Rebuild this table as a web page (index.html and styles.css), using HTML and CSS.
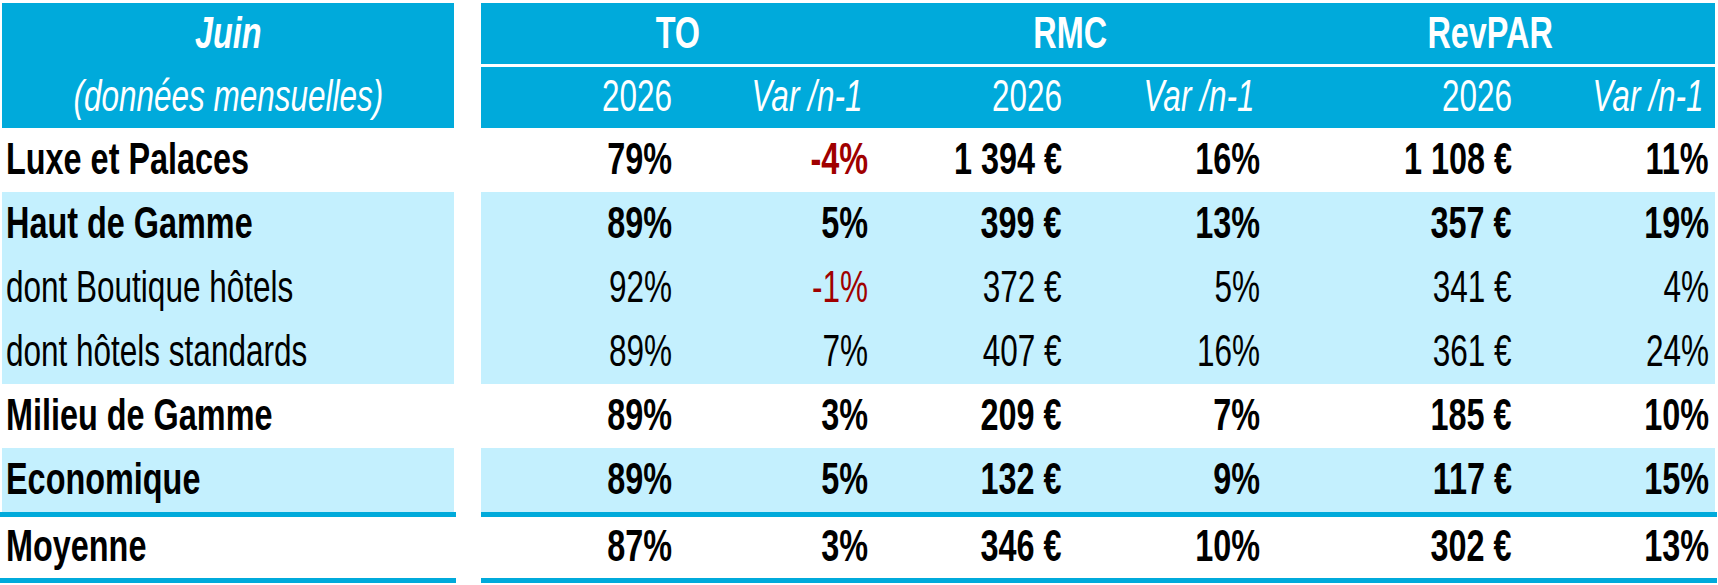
FILE: index.html
```html
<!DOCTYPE html>
<html lang="fr">
<head>
<meta charset="utf-8">
<title>Juin - données mensuelles</title>
<link rel="stylesheet" href="styles.css">
</head>
<body>
<div class="sheet">
  <div class="corner">
    <div class="corner-top"><span class="t">Juin</span></div>
    <div class="corner-bot"><span class="t">(données mensuelles)</span></div>
  </div>
  <div class="grp g-to"><span class="t">TO</span></div>
  <div class="grp g-rmc"><span class="t">RMC</span></div>
  <div class="grp g-rev"><span class="t">RevPAR</span></div>

  <div class="sub c3"><span class="t">2026</span></div>
  <div class="sub var c4"><span class="t">Var /n-1</span></div>
  <div class="sub c5"><span class="t">2026</span></div>
  <div class="sub var c6"><span class="t">Var /n-1</span></div>
  <div class="sub c7"><span class="t">2026</span></div>
  <div class="sub var c8"><span class="t">Var /n-1</span></div>

  <div class="row bold">
    <div class="lab"><span class="t">Luxe et Palaces</span></div>
    <div class="val"><span class="t">79%</span></div>
    <div class="val neg"><span class="t">-4%</span></div>
    <div class="val"><span class="t">1 394 €</span></div>
    <div class="val"><span class="t">16%</span></div>
    <div class="val"><span class="t">1 108 €</span></div>
    <div class="val"><span class="t">11%</span></div>
  </div>

  <div class="row bold alt">
    <div class="lab"><span class="t">Haut de Gamme</span></div>
    <div class="val"><span class="t">89%</span></div>
    <div class="val"><span class="t">5%</span></div>
    <div class="val"><span class="t">399 €</span></div>
    <div class="val"><span class="t">13%</span></div>
    <div class="val"><span class="t">357 €</span></div>
    <div class="val"><span class="t">19%</span></div>
  </div>

  <div class="row alt">
    <div class="lab"><span class="t">dont Boutique hôtels</span></div>
    <div class="val"><span class="t">92%</span></div>
    <div class="val neg"><span class="t">-1%</span></div>
    <div class="val"><span class="t">372 €</span></div>
    <div class="val"><span class="t">5%</span></div>
    <div class="val"><span class="t">341 €</span></div>
    <div class="val"><span class="t">4%</span></div>
  </div>

  <div class="row alt">
    <div class="lab"><span class="t">dont hôtels standards</span></div>
    <div class="val"><span class="t">89%</span></div>
    <div class="val"><span class="t">7%</span></div>
    <div class="val"><span class="t">407 €</span></div>
    <div class="val"><span class="t">16%</span></div>
    <div class="val"><span class="t">361 €</span></div>
    <div class="val"><span class="t">24%</span></div>
  </div>

  <div class="row bold">
    <div class="lab"><span class="t">Milieu de Gamme</span></div>
    <div class="val"><span class="t">89%</span></div>
    <div class="val"><span class="t">3%</span></div>
    <div class="val"><span class="t">209 €</span></div>
    <div class="val"><span class="t">7%</span></div>
    <div class="val"><span class="t">185 €</span></div>
    <div class="val"><span class="t">10%</span></div>
  </div>

  <div class="row bold alt">
    <div class="lab"><span class="t">Economique</span></div>
    <div class="val"><span class="t">89%</span></div>
    <div class="val"><span class="t">5%</span></div>
    <div class="val"><span class="t">132 €</span></div>
    <div class="val"><span class="t">9%</span></div>
    <div class="val"><span class="t">117 €</span></div>
    <div class="val"><span class="t">15%</span></div>
  </div>

  <div class="rule rule-l"></div>
  <div class="rule rule-r"></div>

  <div class="row bold total">
    <div class="lab"><span class="t">Moyenne</span></div>
    <div class="val"><span class="t">87%</span></div>
    <div class="val"><span class="t">3%</span></div>
    <div class="val"><span class="t">346 €</span></div>
    <div class="val"><span class="t">10%</span></div>
    <div class="val"><span class="t">302 €</span></div>
    <div class="val"><span class="t">13%</span></div>
  </div>

  <div class="rule rule-l"></div>
  <div class="rule rule-r"></div>
</div>
</body>
</html>
```

FILE: styles.css
```css
html, body {
  margin: 0;
  padding: 0;
  background: #ffffff;
}

body {
  padding: 3px 0 0 2px;
  font-family: "Liberation Sans", Arial, sans-serif;
  font-size: 45px;
  line-height: 1;
  color: #000000;
}

.sheet {
  display: grid;
  grid-template-columns: 452px 27px 197px 196px 194px 198px 252px 197px;
  grid-template-rows: 61px 3px 61px repeat(6, 64px) 5px 61px 5px;
}

.t {
  display: inline-block;
  white-space: nowrap;
  transform: scaleX(0.7);
}

.bold .t,
.grp .t,
.corner-top .t {
  transform: scaleX(0.72);
}

/* header */
.corner {
  grid-column: 1;
  grid-row: 1 / 4;
  background: #00aadb;
  color: #ffffff;
  font-style: italic;
  display: grid;
  grid-template-rows: 64px 61px;
}

.corner-top,
.corner-bot {
  display: flex;
  align-items: center;
  justify-content: center;
}

.corner-top {
  font-weight: bold;
  padding-bottom: 6px;
}

.corner-bot {
  padding-bottom: 4px;
}

.corner .t {
  transform-origin: center;
}

.grp {
  grid-row: 1;
  background: #00aadb;
  color: #ffffff;
  font-weight: bold;
  display: flex;
  align-items: center;
  justify-content: center;
  padding-bottom: 3px;
}

.g-to { grid-column: 3 / 5; }
.g-rmc { grid-column: 5 / 7; }
.g-rev { grid-column: 7 / 9; }

.grp .t {
  transform-origin: center;
}

.sub {
  grid-row: 3;
  background: #00aadb;
  color: #ffffff;
  display: flex;
  align-items: center;
  justify-content: flex-end;
  padding: 0 6px 4px 0;
}

.c3 { grid-column: 3; }
.c4 { grid-column: 4; }
.c5 { grid-column: 5; }
.c6 { grid-column: 6; }
.c7 { grid-column: 7; }
.c8 { grid-column: 8; }

.sub.var {
  font-style: italic;
  padding-right: 12px;
}

.sub .t {
  transform-origin: right center;
}

/* body rows */
.row {
  display: contents;
}

.lab {
  grid-column: 1;
  display: flex;
  align-items: center;
  padding: 0 0 3px 4px;
}

.lab .t {
  transform-origin: left center;
}

.lab + .val {
  grid-column-start: 3;
}

.val {
  display: flex;
  align-items: center;
  justify-content: flex-end;
  padding: 0 6px 3px 0;
}

.val .t {
  transform-origin: right center;
}

.bold {
  font-weight: bold;
}

.neg {
  color: #a00000;
}

.alt > .lab,
.alt > .val {
  background: #c4f0fe;
}

.total > .lab,
.total > .val {
  padding-bottom: 4px;
}

.rule {
  background: #00aadb;
}

.rule-l {
  grid-column: 1;
  margin: 0 -2px 0 -2px;
}

.rule-r {
  grid-column: 3 / 9;
  margin-right: -2px;
}
```
